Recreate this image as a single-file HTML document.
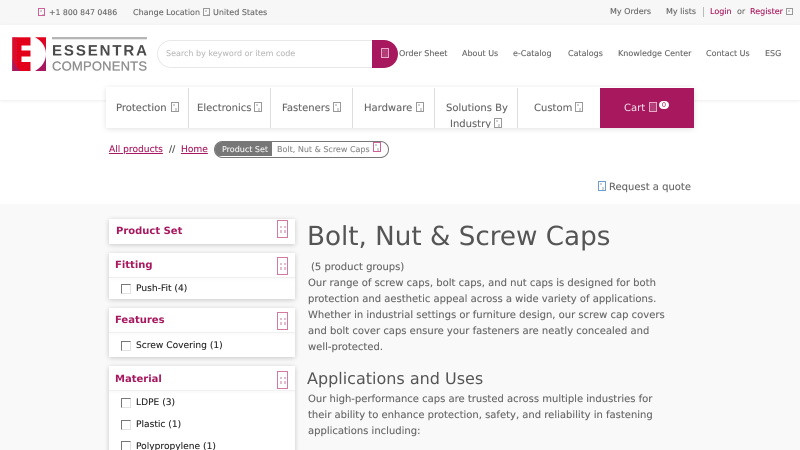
<!DOCTYPE html>
<html><head><meta charset="utf-8"><style>
html,body{margin:0;padding:0;width:800px;height:450px;overflow:hidden}
body{position:relative;background:#fff;font-family:"DejaVu Sans",sans-serif;color:#666;text-rendering:geometricPrecision}
#w{position:absolute;left:0;top:0;width:800px;height:450px;overflow:hidden;filter:blur(.35px)}
.a{position:absolute;white-space:nowrap}
.t{position:absolute;white-space:nowrap;font-size:8px;line-height:12px;-webkit-text-stroke:.12px currentColor}
.g{position:absolute;box-sizing:border-box;width:8px;height:10px;border:1px solid currentColor;color:#999;
background:
linear-gradient(rgba(120,120,120,.35),rgba(120,120,120,.35)) 1px 1px/2px 2px no-repeat,
linear-gradient(rgba(120,120,120,.35),rgba(120,120,120,.35)) 3px 5px/2px 3px no-repeat,
rgba(255,255,255,.15)}
.m{color:#d0609a}
.c{color:#a8185f}
.nav{position:absolute;top:88px;height:40px;background:#fff;box-sizing:border-box;border-right:1px solid #ddd;overflow:hidden}
.nav span{position:absolute;white-space:nowrap;font-size:10px;line-height:16px;color:#666;-webkit-text-stroke:.12px currentColor}
.card{position:absolute;left:109px;width:186px;background:#fff;box-shadow:0 1px 5px rgba(0,0,0,.2)}
.h{position:absolute;font-weight:bold;font-size:10px;line-height:14px;color:#a8185f;white-space:nowrap}
.tog{position:absolute;box-sizing:border-box;width:11px;height:18px;left:277px;border:1px solid #d27aa3;
background:
linear-gradient(#e2bccf,#e2bccf) 2px 5px/2px 2px no-repeat,
linear-gradient(#e2bccf,#e2bccf) 6px 5px/2px 2px no-repeat,
linear-gradient(#e2bccf,#e2bccf) 2px 9px/2px 3px no-repeat,
linear-gradient(#e2bccf,#e2bccf) 6px 9px/2px 3px no-repeat,#fff}
.sep{position:absolute;left:0;right:0;height:1px;background:#f0f0f0;box-shadow:0 1px 2px rgba(0,0,0,.05)}
.cb{position:absolute;left:121px;width:10px;height:10px;box-sizing:border-box;border-top:1.500px solid #777;border-left:1.500px solid #777;border-right:1px solid #e2e2e2;border-bottom:1px solid #e2e2e2}
.l{position:absolute;left:136px;font-size:9.100px;line-height:12px;color:#222;white-space:nowrap;-webkit-text-stroke:.1px currentColor}
.p{position:absolute;left:308px;font-size:10px;line-height:16px;color:#666;white-space:nowrap;-webkit-text-stroke:.12px currentColor}
</style></head><body><div id="w">

<!-- top bar -->
<div class="a" style="left:0;top:0;width:800px;height:25px;background:#f7f7f7"></div>
<div class="g m" style="left:38px;top:8px;width:7px;height:8px"></div>
<div class="t" style="left:49px;top:7px;font-size:7.750px">+1 800 847 0486</div>
<div class="t" style="left:133px;top:7px">Change Location</div>
<div class="g" style="left:203px;top:8px;width:7px;height:8px"></div>
<div class="t" style="left:213px;top:7px">United States</div>
<div class="t" style="left:610px;top:6px">My Orders</div>
<div class="t" style="left:666px;top:6px">My lists</div>
<div class="a" style="left:703px;top:7px;width:1px;height:10px;background:#bbb"></div>
<div class="t c" style="left:710px;top:6px">Login</div>
<div class="t" style="left:737px;top:6px">or</div>
<div class="t c" style="left:750px;top:6px">Register</div>
<div class="g" style="left:786px;top:8px;width:7px;height:7px"></div>

<!-- header -->
<div class="a" style="left:0;top:25px;width:800px;height:75px;background:#fff;box-shadow:0 1px 3px rgba(0,0,0,.08)"></div>

<!-- logo -->
<svg class="a" style="left:12px;top:37px" width="136" height="35" viewBox="0 0 136 35">
<defs><linearGradient id="r" x1="0" y1="0" x2="0" y2="1"><stop offset="0" stop-color="#e2001a"/><stop offset=".45" stop-color="#d01040"/><stop offset=".6" stop-color="#a8185f"/><stop offset="1" stop-color="#a8185f"/></linearGradient></defs>
<rect x="0.300" y="0.300" width="22" height="33.700" fill="#e2001a"/>
<path d="M0.300 0.300 H5 V34 H0.300Z" fill="#d80e2c"/>
<path d="M0.300 22 V34 H9 Q3 30 0.300 22Z" fill="#a8185f"/>
<rect x="9.500" y="8.500" width="14" height="5" fill="#fff"/>
<rect x="9.500" y="19.500" width="14" height="5.500" fill="#fff"/>
<rect x="18.500" y="0" width="6" height="35" fill="#fff"/>
<path d="M23 0.300 C30 4 34 10 34 17 C34 24 30 30 23 34 H34 V0.300Z" fill="url(#r)"/>
<rect x="40" y="0" width="95" height="2.300" fill="#b5b5b5"/>
<text x="40" y="18.300" font-family="Liberation Sans, sans-serif" font-size="15" font-weight="bold" fill="#4a4a4a" textLength="95">ESSENTRA</text>
<text x="40" y="33.500" font-family="Liberation Sans, sans-serif" font-size="13" fill="#8f8f8f" stroke="#8f8f8f" stroke-width=".3" textLength="95">COMPONENTS</text>
</svg>

<!-- search -->
<div class="a" style="left:157px;top:40px;width:240px;height:28px;box-sizing:border-box;border:1px solid #e8e8e8;border-radius:14px;background:#fff"></div>
<div class="t" style="left:166px;top:48px;color:#bbb">Search by keyword or item code</div>
<div class="a" style="left:372px;top:40px;width:26px;height:28px;background:#a8185f;border-radius:0 14px 14px 0"></div>
<div class="g" style="left:381px;top:48px;color:#e8a8c8"></div>

<div class="t" style="left:399px;top:48px">Order Sheet</div>
<div class="t" style="left:462px;top:48px">About Us</div>
<div class="t" style="left:513px;top:48px">e-Catalog</div>
<div class="t" style="left:568px;top:48px">Catalogs</div>
<div class="t" style="left:618px;top:48px">Knowledge Center</div>
<div class="t" style="left:706px;top:48px">Contact Us</div>
<div class="t" style="left:765px;top:48px">ESG</div>

<!-- nav -->
<div class="a" style="left:106px;top:87px;width:588px;height:41px;box-shadow:0 1px 5px rgba(0,0,0,.12)"></div>
<div class="nav" style="left:106px;width:83px"><span style="left:10px;top:13px">Protection</span></div>
<div class="nav" style="left:189px;width:82px"><span style="left:8px;top:13px">Electronics</span></div>
<div class="nav" style="left:271px;width:82px"><span style="left:11px;top:13px">Fasteners</span></div>
<div class="nav" style="left:353px;width:82px"><span style="left:11px;top:13px">Hardware</span></div>
<div class="nav" style="left:435px;width:83px"><span style="left:11px;top:13px">Solutions By</span><span style="left:15px;top:29px">Industry</span></div>
<div class="nav" style="left:518px;width:82px;border-right:0"><span style="left:16px;top:13px">Custom</span></div>
<div class="g" style="left:171px;top:102px"></div>
<div class="g" style="left:254px;top:102px"></div>
<div class="g" style="left:333px;top:102px"></div>
<div class="g" style="left:416px;top:102px"></div>
<div class="g" style="left:494px;top:118px"></div>
<div class="g" style="left:575px;top:102px"></div>
<div class="a" style="left:600px;top:88px;width:94px;height:40px;background:#a8185f"></div>
<div class="a" style="left:624px;top:101px;color:#f5e3ec;font-size:10px;line-height:16px">Cart</div>
<div class="g" style="left:649px;top:102px;color:#e8a8c8"></div>
<div class="a" style="left:659px;top:101px;width:10px;height:8px;background:#fff;border-radius:4px;color:#a8185f;font-size:6.500px;line-height:8px;text-align:center">0</div>

<!-- breadcrumb -->
<div class="t c" style="left:109px;top:144px;font-size:9.100px;text-decoration:underline">All products</div>
<div class="t" style="left:169px;top:144px;font-size:9.100px;color:#444">//</div>
<div class="t c" style="left:181px;top:144px;font-size:9.100px;text-decoration:underline">Home</div>
<div class="a" style="left:214px;top:141px;width:175px;height:17px;box-sizing:border-box;border:1.500px solid #777;border-radius:9px;background:#fff;overflow:hidden"><div class="a" style="left:0;top:0;width:57px;height:14px;background:#777"></div></div>
<div class="t" style="left:222px;top:144px;color:#f2f2f2">Product Set</div>
<div class="t" style="left:277px;top:144px;color:#888">Bolt, Nut &amp; Screw Caps</div>
<div class="g m" style="left:373px;top:142px"></div>

<!-- quote -->
<div class="g" style="left:598px;top:181px;color:#6b9fd4"></div>
<div class="a" style="left:609px;top:180px;font-size:10px;line-height:15px;color:#666;-webkit-text-stroke:.12px currentColor">Request a quote</div>

<!-- main background -->
<div class="a" style="left:0;top:204px;width:800px;height:246px;background:#f9f9f9"></div>

<!-- sidebar -->
<div class="card" style="top:219px;height:25px"></div>
<div class="h" style="left:116px;top:225px">Product Set</div>
<div class="tog" style="top:220px"></div>

<div class="card" style="top:253px;height:46px"><div class="sep" style="top:24px"></div></div>
<div class="h" style="left:115px;top:259px">Fitting</div>
<div class="tog" style="top:257px"></div>
<div class="cb" style="top:284px"></div>
<div class="l" style="top:283px">Push-Fit (4)</div>

<div class="card" style="top:308px;height:49px"><div class="sep" style="top:24px"></div></div>
<div class="h" style="left:115px;top:314px">Features</div>
<div class="tog" style="top:312px"></div>
<div class="cb" style="top:341px"></div>
<div class="l" style="top:340px">Screw Covering (1)</div>

<div class="card" style="top:366px;height:90px"><div class="sep" style="top:24px"></div></div>
<div class="h" style="left:115px;top:373px">Material</div>
<div class="tog" style="top:371px"></div>
<div class="cb" style="top:398px"></div>
<div class="l" style="top:397px">LDPE (3)</div>
<div class="cb" style="top:420px"></div>
<div class="l" style="top:419px">Plastic (1)</div>
<div class="cb" style="top:441px"></div>
<div class="l" style="top:441px">Polypropylene (1)</div>

<!-- main content -->
<div class="a" style="left:307px;top:220px;font-size:26.200px;line-height:34px;color:#555">Bolt, Nut &amp; Screw Caps</div>
<div class="p" style="top:260px;left:311px">(5 product groups)</div>
<div class="p" style="top:276px">Our range of screw caps, bolt caps, and nut caps is designed for both</div>
<div class="p" style="top:292px">protection and aesthetic appeal across a wide variety of applications.</div>
<div class="p" style="top:308px">Whether in industrial settings or furniture design, our screw cap covers</div>
<div class="p" style="top:324px">and bolt cover caps ensure your fasteners are neatly concealed and</div>
<div class="p" style="top:340px">well-protected.</div>
<div class="a" style="left:307px;top:368px;font-size:16px;line-height:21px;color:#555">Applications and Uses</div>
<div class="p" style="top:392px">Our high-performance caps are trusted across multiple industries for</div>
<div class="p" style="top:408px">their ability to enhance protection, safety, and reliability in fastening</div>
<div class="p" style="top:424px">applications including:</div>

</div></body></html>
